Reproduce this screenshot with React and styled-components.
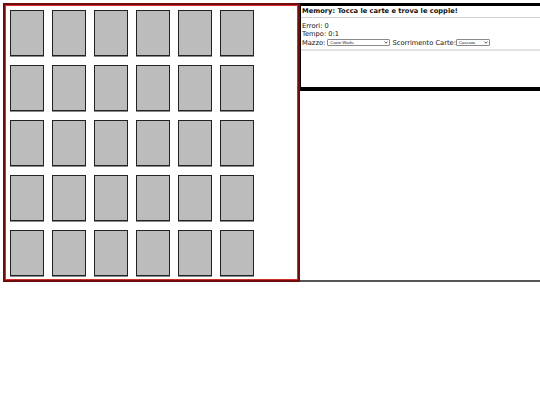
import React from "react";
import styled, { createGlobalStyle } from "styled-components";

const Global = createGlobalStyle`
  html, body { margin: 0; padding: 0; background: #fff; }
  body { font-family: "DejaVu Sans", Verdana, sans-serif; overflow: hidden; }
`;

const Page = styled.div`
  display: flex;
  align-items: stretch;
  padding: 3px 0 0 3px;
  width: 100vw;
  box-sizing: border-box;
`;

const Board = styled.div`
  box-sizing: border-box;
  width: 297px;
  flex: none;
  border: 2px solid #700c0c;
  box-shadow: inset 0 0 0 1px #d22c2c;
  padding: 5px 0 4px 5px;
  display: grid;
  grid-template-columns: repeat(6, 34px);
  grid-auto-rows: 46px;
  column-gap: 8px;
  row-gap: 9px;
`;

const Card = styled.div`
  box-sizing: border-box;
  background: #bcbcbc;
  border: 1px solid #222;
  box-shadow: 0 1px 0 #8a8a8a;
`;

const Side = styled.div`
  flex: 1;
  min-width: 0;
  display: flex;
  flex-direction: column;
  border-bottom: 2px solid #555;
`;

const Panel = styled.div`
  box-sizing: border-box;
  height: 88px;
  border-top: 3px solid #000;
  border-left: 1px solid #000;
  border-bottom: 4px solid #000;
  display: flex;
  flex-direction: column;
  font-size: 6.7px;
  line-height: 8px;
  color: #111;
`;

const Title = styled.div`
  font-weight: bold;
  padding: 1px 1px 2px 1px;
  border-bottom: 1px solid #cfcfcf;
  white-space: nowrap;
`;

const Info = styled.div`
  padding: 4px 1px 2px 1px;
  border-bottom: 2px solid #e2e2e2;
`;

const Line = styled.div`
  white-space: nowrap;
  display: flex;
  align-items: center;
  height: ${(p) => (p.$tall ? "9px" : "8px")};
`;

const SelectWrap = styled.span`
  position: relative;
  display: inline-block;
  width: ${(p) => p.$w}px;
  height: 7px;
  margin: ${(p) => p.$m || "0"};
`;

const Select = styled.select`
  appearance: none;
  -webkit-appearance: none;
  box-sizing: border-box;
  width: 100%;
  height: 100%;
  margin: 0;
  padding: 0 0 0 2px;
  border: 1px solid #8a8a8a;
  border-radius: 1px;
  background: #fff;
  font-family: "Liberation Sans", Arial, sans-serif;
  font-size: 4.4px;
  line-height: 5px;
  color: #222;
  display: block;
`;

const Chevron = styled.svg`
  position: absolute;
  right: 2px;
  top: 2px;
  width: 4px;
  height: 3px;
  pointer-events: none;
`;

function Dropdown({ w, m, options }) {
  return (
    <SelectWrap $w={w} $m={m}>
      <Select defaultValue={options[0]}>
        {options.map((o) => (
          <option key={o}>{o}</option>
        ))}
      </Select>
      <Chevron viewBox="0 0 8 6">
        <path d="M1 1.2 L4 4.4 L7 1.2" fill="none" stroke="#222" strokeWidth="1.5" />
      </Chevron>
    </SelectWrap>
  );
}

export default function App() {
  const cards = Array.from({ length: 30 }, (_, i) => i);
  return (
    <>
      <Global />
      <Page>
        <Board>
          {cards.map((i) => (
            <Card key={i} />
          ))}
        </Board>
        <Side>
          <Panel>
            <Title>Memory: Tocca le carte e trova le coppie!</Title>
            <Info>
              <Line>Errori: 0</Line>
              <Line>Tempo: 0:1</Line>
              <Line $tall>
                Mazzo:&nbsp;
                <Dropdown w={63} options={["Carte Waifu", "Carte Classiche"]} />
                &nbsp;Scorrimento Carte:
                <Dropdown w={34} options={["Cascata", "Normale"]} />
              </Line>
            </Info>
          </Panel>
        </Side>
      </Page>
    </>
  );
}
